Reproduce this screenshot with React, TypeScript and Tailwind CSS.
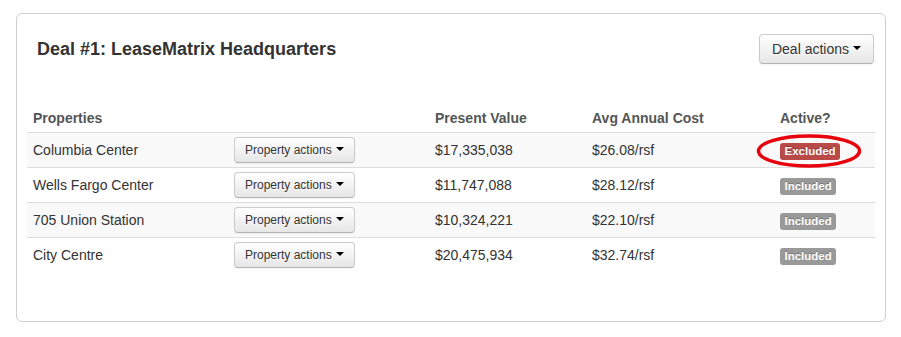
import React from 'react'

type Row = { name: string; pv: string; cost: string; active: boolean }

const ROWS: Row[] = [
  { name: 'Columbia Center', pv: '$17,335,038', cost: '$26.08/rsf', active: false },
  { name: 'Wells Fargo Center', pv: '$11,747,088', cost: '$28.12/rsf', active: true },
  { name: '705 Union Station', pv: '$10,324,221', cost: '$22.10/rsf', active: true },
  { name: 'City Centre', pv: '$20,475,934', cost: '$32.74/rsf', active: true },
]

function Caret() {
  return (
    <span className="inline-block w-0 h-0 align-middle ml-[4px] mb-[3px] border-t-[4px] border-t-black border-x-[4px] border-x-transparent" />
  )
}

const btnClass =
  'inline-flex items-center rounded-[4px] border border-[#ccc] border-b-[#b3b3b3] bg-gradient-to-b from-white to-[#e6e6e6] text-[#333] shadow-[inset_0_1px_0_rgba(255,255,255,0.2),0_1px_2px_rgba(0,0,0,0.05)] [text-shadow:0_1px_1px_rgba(255,255,255,0.75)]'

export default function App() {
  return (
    <div className="pl-[16px] pt-[13px] bg-white min-h-[337px] font-['Liberation_Sans',Arial,sans-serif] text-[14px] leading-[20px] text-[#333]">
      <div className="w-[870px] rounded-[6px] border border-[#cfcfcf] px-[10px] pt-[20px] pb-[49px]">
        {/* Header */}
        <div className="flex items-center justify-between">
          <h2 className="pl-[10px] text-[18px] font-bold text-[#333]">Deal #1: LeaseMatrix Headquarters</h2>
          <button className={`${btnClass} h-[30px] px-[12px] text-[14px] mr-px`}>
            Deal actions
            <Caret />
          </button>
        </div>

        {/* Properties table */}
        <table className="mt-[40px] w-[848px] table-fixed border-collapse">
          <colgroup>
            <col className="w-[202px]" />
            <col className="w-[201px]" />
            <col className="w-[157px]" />
            <col className="w-[188px]" />
            <col className="w-[100px]" />
          </colgroup>
          <thead>
            <tr className="text-left text-[#555]">
              <th className="px-[6px] py-[4px] font-bold">Properties</th>
              <th className="px-[5px] py-[4px]" />
              <th className="px-[5px] py-[4px] font-bold">Present Value</th>
              <th className="px-[5px] py-[4px] font-bold">Avg Annual Cost</th>
              <th className="px-[5px] py-[4px] font-bold">Active?</th>
            </tr>
          </thead>
          <tbody>
            {ROWS.map((r, i) => (
              <tr key={r.name} className={`border-t border-[#ddd] ${i % 2 === 0 ? 'bg-[#f9f9f9]' : 'bg-white'}`}>
                <td className="px-[6px] py-[4px] h-[34px]">{r.name}</td>
                <td className="px-[5px] py-[4px]">
                  <button className={`${btnClass} h-[26px] px-[10px] text-[12px]`}>
                    Property actions
                    <Caret />
                  </button>
                </td>
                <td className="px-[5px] py-[4px]">{r.pv}</td>
                <td className="px-[5px] py-[4px]">{r.cost}</td>
                <td className="relative px-[5px] py-[4px]">
                  <span
                    className={`inline-block rounded-[3px] px-[4.5px] py-[2px] text-[11.5px] leading-[13px] font-bold text-white align-middle [text-shadow:0_-1px_0_rgba(0,0,0,0.25)] ${
                      r.active ? 'bg-[#999]' : 'bg-[#b94a48]'
                    }`}
                  >
                    {r.active ? 'Included' : 'Excluded'}
                  </span>
                  {!r.active && (
                    <svg className="absolute left-[-19px] top-[1px] pointer-events-none" width="106" height="34" viewBox="0 0 106 34">
                      <ellipse cx="53" cy="17" rx="50.5" ry="15" fill="none" stroke="#e8000b" strokeWidth="3.5" />
                    </svg>
                  )}
                </td>
              </tr>
            ))}
          </tbody>
        </table>
      </div>
    </div>
  )
}
